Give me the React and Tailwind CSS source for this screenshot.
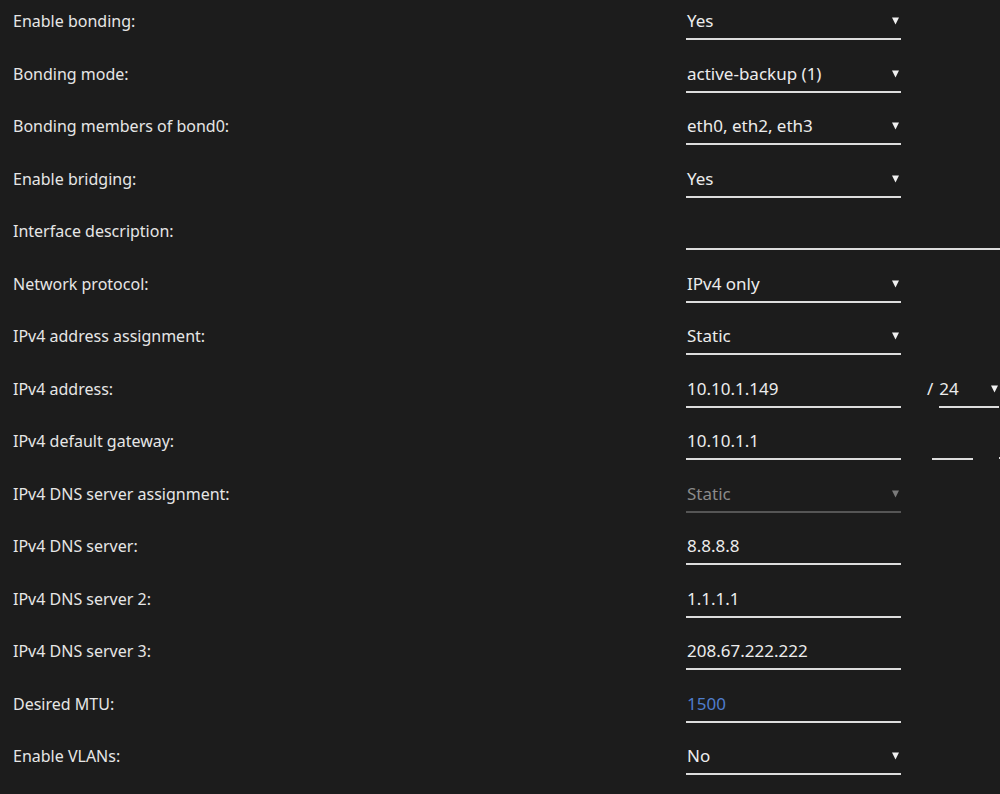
import React from "react";

const rows = [
  { label: "Enable bonding:", value: "Yes", select: true },
  { label: "Bonding mode:", value: "active-backup (1)", select: true },
  { label: "Bonding members of bond0:", value: "eth0, eth2, eth3", select: true },
  { label: "Enable bridging:", value: "Yes", select: true },
  { label: "Interface description:", value: "", wide: true },
  { label: "Network protocol:", value: "IPv4 only", select: true },
  { label: "IPv4 address assignment:", value: "Static", select: true },
  { label: "IPv4 address:", value: "10.10.1.149", prefix: true },
  { label: "IPv4 default gateway:", value: "10.10.1.1", gateway: true },
  { label: "IPv4 DNS server assignment:", value: "Static", select: true, disabled: true },
  { label: "IPv4 DNS server:", value: "8.8.8.8" },
  { label: "IPv4 DNS server 2:", value: "1.1.1.1" },
  { label: "IPv4 DNS server 3:", value: "208.67.222.222" },
  { label: "Desired MTU:", value: "1500", placeholder: true },
  { label: "Enable VLANs:", value: "No", select: true },
];

function Arrow({ dim }) {
  return (
    <svg width="9" height="8" viewBox="0 0 9 8" className="shrink-0">
      <path d="M1 0.5 L8 0.5 L4.5 7.5 Z" fill={dim ? "#7a7a7a" : "#f0f0f0"} />
    </svg>
  );
}

function Row({ row }) {
  const lineColor = row.disabled ? "border-[#555555]" : "border-[#dcdcdc]";
  const textColor = row.disabled
    ? "text-[#8a8a8a]"
    : row.placeholder
    ? "text-[#4f7dcc]"
    : "text-[#ececec]";

  return (
    <div className="flex h-[52.5px] items-start">
      <div className="w-[686px] shrink-0 pl-[13px] pt-[10px] text-[16px] leading-[22px] text-[#e6e6e6]">
        {row.label}
      </div>
      <div
        className={`flex h-[40px] shrink-0 items-start justify-between border-b-2 ${lineColor} ${
          row.wide ? "w-[330px]" : "w-[215px]"
        } pl-[1px] pr-[1px] pt-[10px] text-[17px] leading-[22px] ${textColor}`}
      >
        <span>{row.value}</span>
        {row.select && (
          <span className="pt-[7px]">
            <Arrow dim={row.disabled} />
          </span>
        )}
      </div>
      {row.prefix && (
        <div className="flex h-[40px] shrink-0 items-start pl-[26px] pt-[10px] text-[17px] leading-[22px] text-[#ececec]">
          <span className="pr-[6px]">/</span>
          <div className="flex h-[30px] w-[60px] justify-between border-b-2 border-[#dcdcdc]">
            <span>24</span>
            <span className="pt-[7px]">
              <Arrow />
            </span>
          </div>
        </div>
      )}
      {row.gateway && (
        <div className="flex h-[40px] shrink-0 items-start pl-[31px]">
          <div className="h-[40px] w-[41px] border-b-2 border-[#dcdcdc]" />
          <div className="ml-[26px] mt-[37px] h-[2px] w-[2px] bg-[#dcdcdc]" />
        </div>
      )}
    </div>
  );
}

export default function App() {
  return (
    <div
      className="h-[794px] w-[1000px] overflow-hidden bg-[#1c1c1c]"
      style={{ fontFamily: '"Noto Sans", "Open Sans", sans-serif' }}
    >
      {rows.map((row) => (
        <Row key={row.label} row={row} />
      ))}
    </div>
  );
}
